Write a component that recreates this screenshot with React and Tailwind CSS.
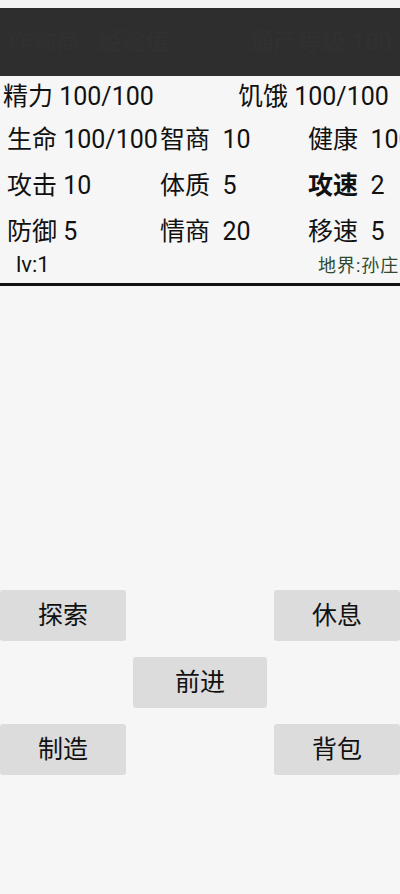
import React from 'react';

const font = { fontFamily: 'Roboto, "Noto Sans CJK SC", sans-serif' };

const rows = [
    [['生命', '100/100'], ['智商', '10'], ['健康', '100']],
    [['攻击', '10'], ['体质', '5'], ['攻速', '2', true]],
    [['防御', '5'], ['情商', '20'], ['移速', '5']],
];

const Btn = ({ children, className = '' }) => (
    <div className={`h-[51px] bg-[#dcdcdc] rounded-[3px] flex items-center justify-center text-[25px] text-[#111] ${className}`}>
        {children}
    </div>
);

export default function App() {
    return (
        <div className="w-[400px] h-[894px] overflow-hidden bg-[#f6f6f6] text-[#111]" style={font}>
            {/* top bar */}
            <div className="h-2 bg-[#f4f4f4]" />
            <div className="h-[68px] bg-[#2e2e2e] flex items-center justify-between px-2 text-[24px] text-[#313131] whitespace-nowrap">
                <span>作物商 : 经验值</span>
                <span>通产等级 100</span>
            </div>

            {/* stats */}
            <div className="text-[25px] leading-none whitespace-nowrap">
                <div className="h-[40px] flex items-center">
                    <span className="w-[238px] pl-[3px]">精力 100/100</span>
                    <span>饥饿 100/100</span>
                </div>
                {rows.map((row, i) => (
                    <div key={i} className="h-[46px] grid grid-cols-[153px_148px_1fr] items-center">
                        {row.map(([label, val, bold], j) => (
                            <span key={label} className="pl-[7px]">
                                <span className={bold ? 'font-bold' : ''}>{label}</span>
                                {j === 0 ? ' ' : '\u00a0\u00a0'}
                                {val}
                            </span>
                        ))}
                    </div>
                ))}
                <div className="h-[29px] flex items-start justify-between pl-[16px]">
                    <span className="text-[22px] leading-[22px]">lv:1</span>
                    <span className="text-[18px] leading-[24px] tracking-[1px] text-[#2f4a2f] w-[82px] shrink-0">地界:孙庄</span>
                </div>
            </div>
            <div className="h-[3px] bg-[#111]" />

            {/* actions */}
            <div className="pt-[304px] flex flex-col gap-4">
                <div className="flex justify-between">
                    <Btn className="w-[126px]">探索</Btn>
                    <Btn className="w-[126px]">休息</Btn>
                </div>
                <div className="flex justify-center">
                    <Btn className="w-[134px]">前进</Btn>
                </div>
                <div className="flex justify-between">
                    <Btn className="w-[126px]">制造</Btn>
                    <Btn className="w-[126px]">背包</Btn>
                </div>
            </div>
        </div>
    );
}
